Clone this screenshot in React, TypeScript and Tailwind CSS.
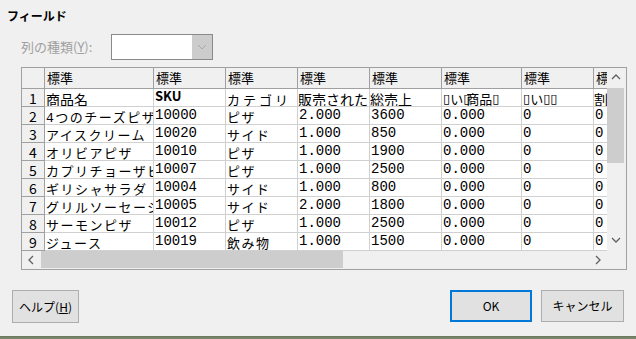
import React from 'react';

const cols = [109, 72, 72, 72, 72, 80, 72, 60];

const rows: string[][] = [
  ['4つのチーズピザ', '10000', 'ピザ', '2.000', '3600', '0.000', '0', '0'],
  ['アイスクリーム', '10020', 'サイド', '1.000', '850', '0.000', '0', '0'],
  ['オリビアピザ', '10010', 'ピザ', '1.000', '1900', '0.000', '0', '0'],
  ['カプリチョーザピザ', '10007', 'ピザ', '1.000', '2500', '0.000', '0', '0'],
  ['ギリシャサラダ', '10004', 'サイド', '1.000', '800', '0.000', '0', '0'],
  ['グリルソーセージ', '10005', 'サイド', '2.000', '1800', '0.000', '0', '0'],
  ['サーモンピザ', '10012', 'ピザ', '1.000', '2500', '0.000', '0', '0'],
  ['ジュース', '10019', '飲み物', '1.000', '1500', '0.000', '0', '0'],
];

const isLatin = (s: string) => /^[0-9A-Za-z.]+$/.test(s);

function Chevron({ dir }: { dir: 'up' | 'down' | 'left' | 'right' }) {
  const pts = {
    up: '1,6 5,2 9,6',
    down: '1,2 5,6 9,2',
    left: '6,1 2,5 6,9',
    right: '3,1 7,5 3,9',
  }[dir];
  return (
    <svg width="10" height="10" viewBox="0 0 10 10">
      <polyline points={pts} fill="none" stroke="#606060" strokeWidth="1.3" />
    </svg>
  );
}

function Cell({ w, text }: { w: number; text: string }) {
  const latin = isLatin(text);
  return (
    <div
      className={`shrink-0 h-full overflow-hidden whitespace-nowrap border-r border-b border-[#d0d0d0] bg-white pl-[1px] text-black font-['Liberation_Mono','Noto_Sans_CJK_JP',monospace] ${
        latin ? 'text-[14px] leading-[16px]' : 'text-[13px] tracking-[1.5px] leading-[23px]'
      }`}
      style={{ width: w }}
    >
      {text}
    </div>
  );
}

export default function App() {
  return (
    <div className="w-[636px] h-[339px] bg-[#f0f0f0] flex flex-col font-['Noto_Sans_CJK_JP',sans-serif] text-black overflow-hidden">
      {/* title */}
      <div className="h-[34px] pt-[8px] pl-[7px] text-[12px] font-bold leading-[16px]">フィールド</div>

      {/* column type */}
      <div className="h-[26px] flex items-center pl-[21px]">
        <div className="w-[90px] text-[13px] text-[#a0a0a0]">
          列の種類(<span className="underline">Y</span>):
        </div>
        <div className="w-[102px] h-[26px] border border-[#8a8a8a] bg-white flex justify-end">
          <div className="w-[20px] h-full bg-[#cccccc] flex items-center justify-center">
            <svg width="10" height="10" viewBox="0 0 10 10">
              <polyline points="1,3 5,7 9,3" fill="none" stroke="#a8a8a8" strokeWidth="1" />
            </svg>
          </div>
        </div>
      </div>

      {/* grid frame */}
      <div className="mt-[7px] ml-[21px] w-[606px] h-[203px] border border-[#a0a0a0] flex flex-col">
        <div className="flex h-[183px]">
          <div className="w-[585px] overflow-hidden flex flex-col">
            {/* header row */}
            <div className="flex h-[21px] shrink-0">
              <div className="w-[23px] shrink-0 h-full bg-[#f0f0f0] border-r border-b border-[#a0a0a0]" />
              {cols.map((w, i) => (
                <div
                  key={i}
                  className="shrink-0 h-full overflow-hidden whitespace-nowrap bg-[#f0f0f0] border-r border-b border-[#a0a0a0] pl-[2px] text-[13px] leading-[20px]"
                  style={{ width: w }}
                >
                  標準
                </div>
              ))}
            </div>

            {/* first row: column names */}
            <div className="flex h-[18px] shrink-0">
              <div className="w-[23px] shrink-0 h-full bg-[#f0f0f0] border-r border-b border-[#a0a0a0] text-center text-[14px] leading-[18px]">1</div>
              <div className="w-[109px] shrink-0 h-full border-r border-b border-[#d0d0d0] bg-white pl-[1px] text-[14px] leading-[20px] overflow-hidden whitespace-nowrap">商品名</div>
              <div className="w-[72px] shrink-0 h-full border-r border-b border-[#d0d0d0] bg-white pl-[1px] text-[13px] font-bold leading-[14px] overflow-hidden">SKU</div>
              <div className="w-[72px] shrink-0 h-full border-r border-b border-[#d0d0d0] bg-white pl-[1px] text-[13px] tracking-[3px] leading-[22px] overflow-hidden whitespace-nowrap">カテゴリ</div>
              <div className="w-[72px] shrink-0 h-full border-r border-b border-[#d0d0d0] bg-white text-[14px] leading-[20px] overflow-hidden whitespace-nowrap">販売された</div>
              <div className="w-[72px] shrink-0 h-full border-r border-b border-[#d0d0d0] bg-white text-[14px] leading-[20px] overflow-hidden whitespace-nowrap">総売上</div>
              <div className="w-[80px] shrink-0 h-full border-r border-b border-[#d0d0d0] bg-white pl-[1px] text-[13px] leading-[20px] overflow-hidden whitespace-nowrap flex">
                <span className="font-['DejaVu_Sans',sans-serif]">▯</span>
                <span>い</span>
                <span className="font-['DejaVu_Sans',sans-serif]">▯</span>
                <span className="ml-[-4px]">商品</span>
                <span className="font-['DejaVu_Sans',sans-serif]">▯</span>
              </div>
              <div className="w-[72px] shrink-0 h-full border-r border-b border-[#d0d0d0] bg-white pl-[1px] text-[13px] leading-[20px] overflow-hidden whitespace-nowrap flex">
                <span className="font-['DejaVu_Sans',sans-serif]">▯</span>
                <span>い</span>
                <span className="font-['DejaVu_Sans',sans-serif]">▯▯</span>
              </div>
              <div className="w-[60px] shrink-0 h-full border-r border-b border-[#d0d0d0] bg-white text-[14px] leading-[20px] overflow-hidden">割</div>
            </div>

            {rows.map((r, ri) => (
              <div key={ri} className="flex h-[18px] shrink-0">
                <div className="w-[23px] shrink-0 h-full bg-[#f0f0f0] border-r border-b border-[#a0a0a0] text-center text-[14px] leading-[18px]">
                  {ri + 2}
                </div>
                {r.map((t, ci) => (
                  <Cell key={ci} w={cols[ci]} text={t} />
                ))}
              </div>
            ))}
          </div>

          {/* vertical scrollbar */}
          <div className="w-[17px] shrink-0 bg-[#f0f0f0] flex flex-col items-center">
            <div className="h-[20px] flex items-center justify-center">
              <Chevron dir="up" />
            </div>
            <div className="w-[17px] h-[75px] bg-[#cdcdcd]" />
            <div className="flex-1" />
            <div className="h-[20px] flex items-center justify-center">
              <Chevron dir="down" />
            </div>
          </div>
        </div>

        {/* horizontal scrollbar */}
        <div className="flex h-[17px]">
          <div className="w-[585px] flex items-center bg-[#f0f0f0]">
            <div className="w-[19px] flex justify-center">
              <Chevron dir="left" />
            </div>
            <div className="w-[302px] h-full bg-[#cdcdcd]" />
            <div className="flex-1" />
            <div className="w-[19px] flex justify-center">
              <Chevron dir="right" />
            </div>
          </div>
          <div className="w-[17px] bg-[#f0f0f0]" />
        </div>
      </div>

      {/* buttons */}
      <div className="mt-[20px] h-[33px] flex px-[12px] text-[12px]">
        <button className="w-[67px] h-full bg-[#e1e1e1] border border-[#adadad]">
          ヘルプ(<span className="underline">H</span>)
        </button>
        <div className="flex-1" />
        <button className="w-[82px] h-[32px] bg-[#e1e1e1] border-2 border-[#0078d7]">OK</button>
        <button className="ml-[9px] w-[83px] h-[32px] bg-[#e1e1e1] border border-[#adadad]">キャンセル</button>
      </div>

      <div className="mt-auto h-[3px] border-t border-[#6d7a5a] bg-[#7a8570]" />
    </div>
  );
}
